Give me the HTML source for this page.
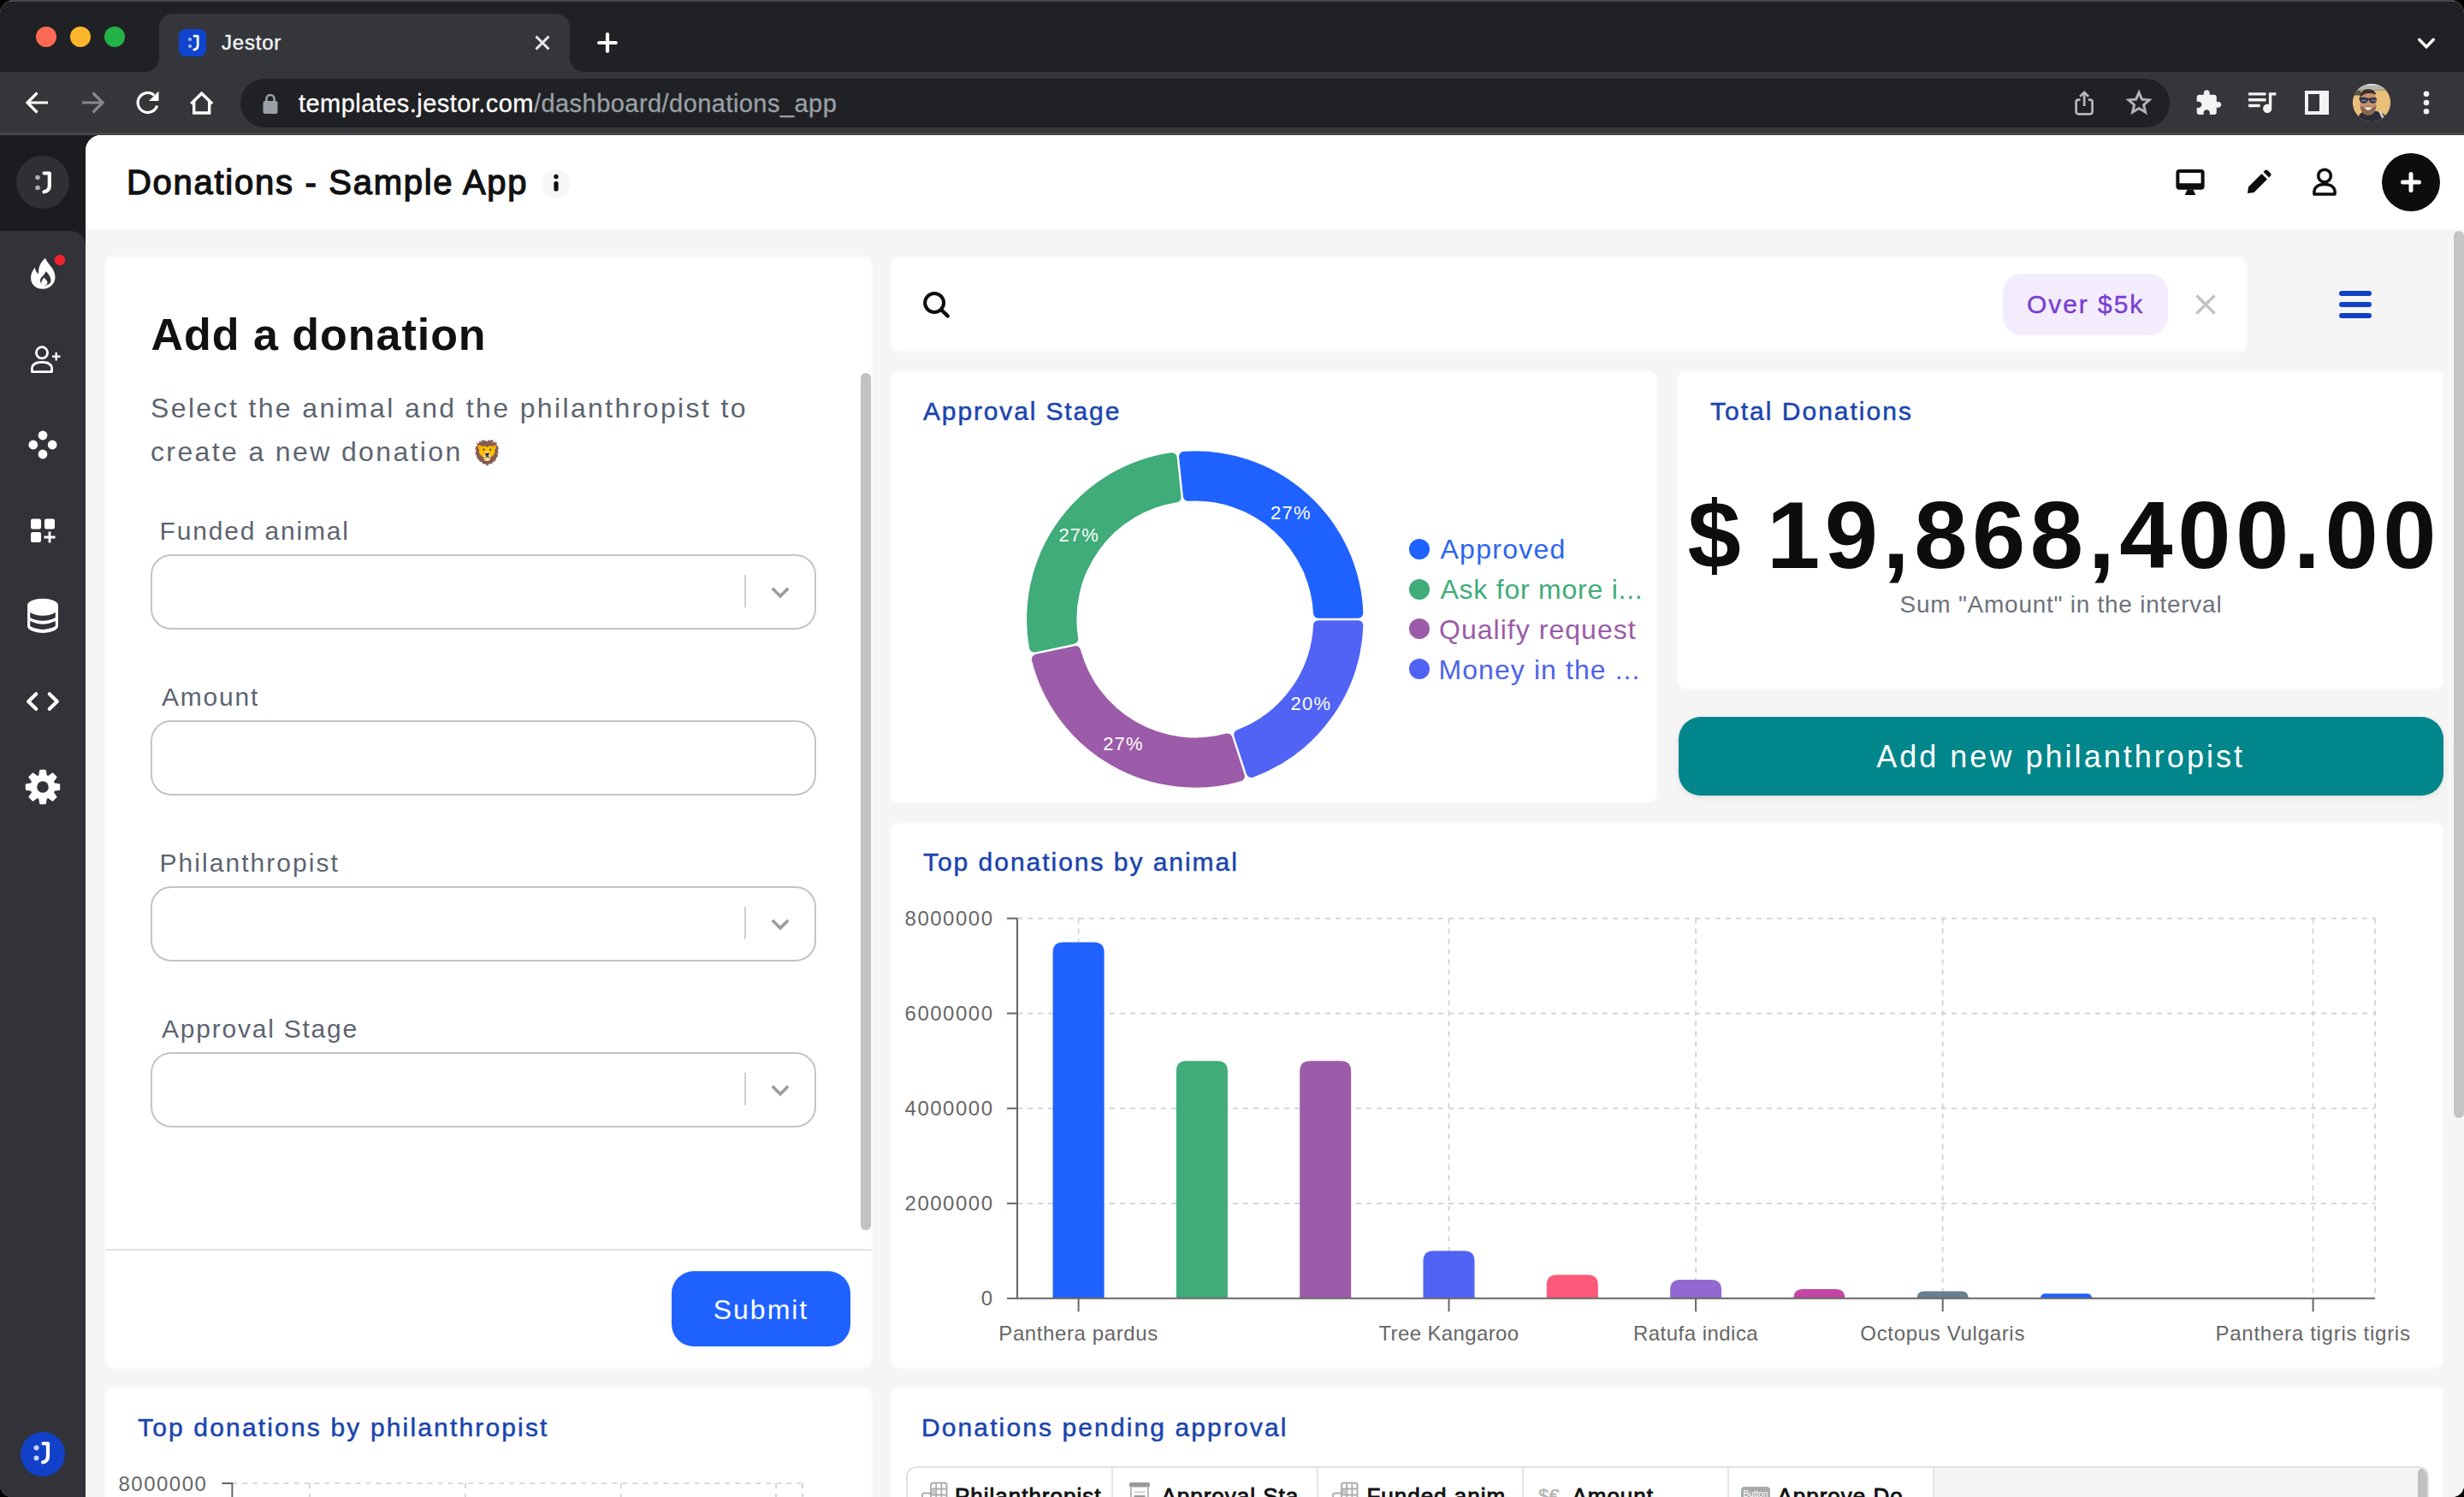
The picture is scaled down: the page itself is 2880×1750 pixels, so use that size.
<!DOCTYPE html>
<html lang="en">
<head>
<meta charset="utf-8">
<title>Jestor</title>
<style>
*{box-sizing:border-box;margin:0;padding:0}
html,body{width:2880px;height:1750px;overflow:hidden;background:#000}
body{font-family:"Liberation Sans",sans-serif;position:relative;color:#111}
.abs{position:absolute}
#win{position:absolute;left:0;top:0;width:2880px;height:1750px;border-radius:16px 16px 14px 14px;overflow:hidden;background:#f5f5f5}
/* ---------- browser chrome ---------- */
#tabbar{position:absolute;left:0;top:0;width:2880px;height:84px;background:#202124}
#tabbar:before{content:"";position:absolute;left:0;top:0;width:100%;height:2px;background:#47484c}
#toolbar{position:absolute;left:0;top:84px;width:2880px;height:74px;background:#35363a;border-bottom:3px solid #45464a}
.tl{position:absolute;top:31.200px;width:24px;height:24px;border-radius:50%}
#tab{position:absolute;left:186px;top:16px;width:480px;height:68px;background:#35363a;border-radius:16px 16px 0 0}
#tab:before,#tab:after{content:"";position:absolute;bottom:0;width:16px;height:16px;background:radial-gradient(circle at 0 0,transparent 15.5px,#35363a 16.5px)}
#tab:before{left:-16px}
#tab:after{right:-16px;background:radial-gradient(circle at 100% 0,transparent 15.5px,#35363a 16.5px)}
#fav{position:absolute;left:209px;top:34px;width:32px;height:32px;border-radius:7.500px;background:#1044cf}
#tabtitle{position:absolute;left:259px;top:30px;font-size:24px;line-height:40px;color:#f1f3f4;letter-spacing:.8px;-webkit-text-stroke:.45px #f1f3f4;white-space:nowrap}
#pill{position:absolute;left:281px;top:92px;width:2255px;height:57px;border-radius:29px;background:#202124}
#url{position:absolute;left:349px;top:100.500px;font-size:29px;line-height:40px;color:#fff;white-space:nowrap;letter-spacing:.45px;-webkit-text-stroke:.3px currentColor}
#url span{color:#9aa0a6}
/* ---------- app ---------- */
#side{position:absolute;left:0;top:158px;width:140px;height:1592px;background:#1b1c20}
#side2{position:absolute;left:0;top:270px;width:100px;height:1480px;background:#323338;border-radius:0 18px 0 0}
#main{position:absolute;left:100px;top:158px;width:2780px;height:1592px;background:#f5f5f5;border-radius:18px 0 0 0;overflow:hidden}
#hdr{position:absolute;left:0;top:0;width:2780px;height:110px;background:#fff}
#title{position:absolute;left:148px;top:188px;font-size:40px;line-height:50px;color:#111;white-space:nowrap;letter-spacing:1.72px;-webkit-text-stroke:1.3px #111}
.card{position:absolute;background:#fff;border-radius:8px;box-shadow:0 0 4px 1px rgba(255,255,255,.85)}
.ct{-webkit-text-stroke:.5px #1a45ad}
.ms{-webkit-text-stroke:.4px currentColor}
.lbl{position:absolute;left:189px;font-size:30px;line-height:40px;color:#5d6470;letter-spacing:1.4px;white-space:nowrap}
.inp{position:absolute;left:176px;width:778px;height:88px;border:2px solid #c4c4c8;border-radius:24px;background:#fff}
.inp.sel:before{content:"";position:absolute;left:692px;top:22px;width:2px;height:38px;background:#cfcfcf}
</style>
</head>
<body>
<div id="win">
<!-- CHROME -->
<div id="tabbar"></div>
<div class="tl" style="left:41.900px;background:#fe6a54"></div>
<div class="tl" style="left:81.900px;background:#feb72d"></div>
<div class="tl" style="left:121.900px;background:#22b446"></div>
<div id="tab"></div>
<div id="fav"><svg width="32" height="32" viewBox="0 0 32 32"><circle cx="13" cy="12" r="2.100" fill="#a9c0f7"/><circle cx="13" cy="20" r="2.100" fill="#a9c0f7"/><path d="M18 8.200h4.200v10.800c0 3.200-1.400 4.600-4.400 5.200" fill="none" stroke="#fff" stroke-width="2.800" stroke-linecap="round" stroke-linejoin="round"/></svg></div>
<div id="tabtitle">Jestor</div>
<svg class="abs" style="left:622px;top:38px" width="24" height="24" viewBox="0 0 24 24"><path d="M4.5 4.5l15 15M19.5 4.5l-15 15" stroke="#e8eaed" stroke-width="3" fill="none"/></svg>
<svg class="abs" style="left:694px;top:34px" width="32" height="32" viewBox="0 0 32 32"><path d="M16 6.200v19.600M6.200 16h19.600" stroke="#fff" stroke-width="4.200" stroke-linecap="round" fill="none"/></svg>
<svg class="abs" style="left:2820px;top:38px" width="32" height="24" viewBox="0 0 32 24"><path d="M7.700 8.300l8.300 8.500 8.300-8.500" stroke="#fff" stroke-width="3.400" fill="none" stroke-linecap="round" stroke-linejoin="miter"/></svg>
<div id="toolbar"></div>
<!-- nav icons -->
<svg class="abs" style="left:28px;top:104px" width="32" height="32" viewBox="0 0 32 32"><path d="M28 16H5M15.5 4.5L4 16l11.500 11.500" stroke="#fff" stroke-width="3.2" fill="none"/></svg>
<svg class="abs" style="left:92px;top:104px" width="32" height="32" viewBox="0 0 32 32"><path d="M4 16h23M16.500 4.500L28 16 16.500 27.500" stroke="#86888c" stroke-width="3.200" fill="none"/></svg>
<svg class="abs" style="left:156px;top:103px" width="34" height="34" viewBox="0 0 34 34"><path d="M27.600 20.500A11.500 11.500 0 1 1 24.200 8.300" stroke="#fff" stroke-width="3.200" fill="none"/><path d="M29.500 3.500v11.500H18z" fill="#fff"/></svg>
<svg class="abs" style="left:219px;top:103px" width="34" height="34" viewBox="0 0 34 34"><path d="M4.300 18.300L16.700 6.200l12.400 12.100" stroke="#fff" stroke-width="3.400" fill="none"/><path d="M7.700 15.500V29h18V15.500" stroke="#fff" stroke-width="3.400" fill="none"/></svg>
<div id="pill"></div>
<svg class="abs" style="left:306px;top:108px" width="20" height="26" viewBox="0 0 20 26"><rect x="1.500" y="10" width="17" height="15" rx="2.500" fill="#9aa0a6"/><path d="M5.500 11V7.500a4.500 4.500 0 0 1 9 0V11" stroke="#9aa0a6" stroke-width="2.600" fill="none"/></svg>
<div id="url">templates.jestor.com<span>/dashboard/donations_app</span></div>
<!-- right icons -->
<svg class="abs" style="left:2422px;top:103px" width="28" height="34" viewBox="0 0 28 34"><path d="M9.500 13.700H7.200a2.500 2.500 0 0 0-2.500 2.500v11.600a2.500 2.500 0 0 0 2.500 2.500h13.900a2.500 2.500 0 0 0 2.500-2.500V16.200a2.500 2.500 0 0 0-2.500-2.500H18.800M14.150 21V5M9.200 9.800l4.950-4.900 4.950 4.900" stroke="#b4b7bb" stroke-width="2.700" fill="none" stroke-linejoin="miter"/></svg>
<svg class="abs" style="left:2481.800px;top:102px" width="36.200" height="36.200" viewBox="0 0 24 24"><path stroke="#b4b7bb" stroke-width=".35" d="M22 9.240l-7.190-.620L12 2 9.190 8.630 2 9.240l5.460 4.730L5.820 21 12 17.270 18.180 21l-1.630-7.030L22 9.240zM12 15.400l-3.760 2.270 1-4.280-3.320-2.880 4.380-.380L12 6.100l1.710 4.040 4.380.380-3.320 2.880 1 4.280L12 15.400z" fill="#b4b7bb"/></svg>
<svg class="abs" style="left:2564.500px;top:103.800px" width="32.600" height="32.600" viewBox="0 0 24 24"><path d="M20.500 11H19V7c0-1.100-.900-2-2-2h-4V3.500C13 2.120 11.880 1 10.500 1S8 2.120 8 3.500V5H4c-1.100 0-1.990.900-1.990 2v3.800H3.500c1.490 0 2.700 1.210 2.700 2.700s-1.210 2.700-2.700 2.700H2V20c0 1.100.900 2 2 2h3.800v-1.500c0-1.490 1.210-2.700 2.700-2.700s2.700 1.210 2.700 2.700V22H17c1.100 0 2-.900 2-2v-4h1.500c1.380 0 2.500-1.120 2.500-2.500S21.880 11 20.500 11z" fill="#f1f3f4"/></svg>
<svg class="abs" style="left:2622.900px;top:97.500px" width="40.800" height="40.800" viewBox="0 0 24 24"><path d="M15 6H3v2h12V6zm0 4H3v2h12v-2zM3 16h8v-2H3v2zM17 6v8.180c-.310-.110-.650-.180-1-.180-1.660 0-3 1.340-3 3s1.340 3 3 3 3-1.340 3-3V8h3V6h-5z" fill="#f1f3f4"/></svg>
<svg class="abs" style="left:2693px;top:105px" width="30" height="30" viewBox="0 0 30 30"><path d="M1 1h28v28H1zM5 5v20h13V5z" fill="#f1f3f4" fill-rule="evenodd"/></svg>
<svg class="abs" style="left:2748.800px;top:97px" width="46" height="46" viewBox="0 0 46 46"><defs><clipPath id="avc"><circle cx="23" cy="23" r="22.100"/></clipPath></defs><g clip-path="url(#avc)"><rect width="46" height="46" fill="#e8c07a"/><rect width="46" height="7.500" fill="#b4b8b4"/><rect width="46" height="2.600" fill="#e6e7e6"/><path d="M0 7.500h46v1.600H0z" fill="#9c9a86"/><rect x="1" y="9" width="9.500" height="5.500" fill="#4f5848"/><path d="M6 46c.5-7 3.500-11.500 8-12.500l12-1c8 1 15 4 17 13.500z" fill="#2a2c38"/><path d="M31 33l5.500 11 2.500-1.200L33.500 32z" fill="#d8d4d0"/><path d="M9.500 21c0-8 4-12.500 9.500-12.500s9.500 4.500 9.500 12v6c0 6.500-4 11-9.500 11s-9.500-4.500-9.500-11z" fill="#c88f6c"/><path d="M9.800 26c.5 7 4 12.200 9.200 12.200s8.800-5 9.400-12.200c-1.600 2-3.200 2.600-4.800 2.400-1.600-1.400-7-1.400-8.800 0-1.800.2-3.600-.6-5-2.400z" fill="#7f5e4a" opacity=".85"/><path d="M9.300 18c-.5-6 3.200-10.800 9.700-10.800 5 0 8.300 2.300 9.300 6.300-3-1.300-6-1.800-9.300-1.500-4.200.4-7.700 2.400-9.700 6z" fill="#3b2d27"/><path d="M8.300 17.500c3.300-.9 6.500-.9 9.800 0l1.800.7 1.800-.7c2.400-.7 4.700-.8 7 0v2.300c0 2.400-1.700 4-4 4-2.300 0-3.900-1.200-4.600-3.300l-.7-1.200-.7 1.200c-.8 2.100-2.500 3.300-4.900 3.300-2.600 0-4.700-1.700-4.900-4.200z" fill="#262b42"/><path d="M10.500 19.200h6.500v2.600h-5.800zM22 19.200h6v2.600h-5.400z" fill="#6f7f8f" opacity=".8"/><path d="M14.800 28.200h8.600c-.7 2.400-2.300 3.600-4.300 3.600s-3.600-1.200-4.300-3.600z" fill="#f3e6e0"/></g></svg>
<svg class="abs" style="left:2828px;top:104px" width="16" height="32" viewBox="0 0 16 32"><circle cx="8" cy="5.700" r="3.300" fill="#f1f3f4"/><circle cx="8" cy="16" r="3.300" fill="#f1f3f4"/><circle cx="8" cy="26.300" r="3.300" fill="#f1f3f4"/></svg>
<!-- APP -->
<div id="side"></div>
<div id="side2"></div>
<div class="abs" style="left:19px;top:182px;width:62px;height:62px;border-radius:50%;background:#2f3034"></div>
<svg class="abs" style="left:19px;top:182px" width="62" height="62" viewBox="0 0 62 62"><circle cx="25" cy="25.500" r="2.800" fill="#a9abb0"/><circle cx="25" cy="37.500" r="2.800" fill="#a9abb0"/><path d="M32.500 20.500h6.300v14.500c0 4.500-2.100 6.600-6.300 7.300" fill="none" stroke="#fff" stroke-width="4.200" stroke-linecap="round" stroke-linejoin="round"/></svg>
<!-- fire -->
<svg class="abs" style="left:34px;top:298px" width="34" height="42" viewBox="0 0 34 42"><path d="M19.100 3.700C20.500 10 30.500 15 30.500 26.100C30.500 34 24 39.800 16.100 39.800C8 39.800 2.100 34.500 2.100 27.200C2.100 21 5 17.500 6.700 14.500C7.200 18 8.800 21 11.100 22.500C10.500 17 12 9 19.100 3.700Z" fill="#fff"/><path d="M19.700 19C23 23 25.500 26 25.500 29.500C25.500 33 22.500 35.500 19 35.500C15.500 35.500 13 33.200 13 30C13 26 18 24 19.700 19Z" fill="#323338"/><path d="M17.300 26.500C19.500 28.500 21.500 30.300 21.500 32.200C21.500 34.200 19.800 35.600 17.800 35.600C15.800 35.600 14.200 34.200 14.200 32.200C14.200 30 16.300 28.800 17.300 26.500Z" fill="#fff"/></svg>
<svg class="abs" style="left:62px;top:296px" width="16" height="16" viewBox="0 0 16 16"><circle cx="8" cy="8" r="6.200" fill="#f5222d"/></svg>
<!-- user plus -->
<svg class="abs" style="left:30px;top:398px" width="46" height="42" viewBox="0 0 46 42"><circle cx="19" cy="14.300" r="6.600" stroke="#fff" stroke-width="2.800" fill="none"/><path d="M7.400 36.600V33.500c0-5.200 4.200-8.100 11.600-8.100s11.600 2.900 11.600 8.100v3.100z" stroke="#fff" stroke-width="2.800" fill="none" stroke-linejoin="round"/><path d="M35.700 14v9.400M31 18.700h9.400" stroke="#fff" stroke-width="2.400" fill="none"/></svg>
<!-- dots -->
<svg class="abs" style="left:30px;top:500px" width="40" height="40" viewBox="0 0 40 40"><circle cx="20" cy="9" r="5.400" fill="#fff"/><circle cx="20" cy="31" r="5.400" fill="#fff"/><circle cx="8.800" cy="20" r="5.400" fill="#fff"/><circle cx="31.200" cy="20" r="5.400" fill="#fff"/></svg>
<!-- grid plus -->
<svg class="abs" style="left:34px;top:604px" width="34" height="34" viewBox="0 0 34 34"><rect x="2" y="2.500" width="12" height="12" rx="2.200" fill="#fff"/><rect x="18" y="2.500" width="12" height="12" rx="2.200" fill="#fff"/><rect x="2" y="18" width="12" height="12" rx="2.200" fill="#fff"/><path d="M24 17.500v13M17.500 24h13" stroke="#fff" stroke-width="2.800" fill="none"/></svg>
<!-- database -->
<svg class="abs" style="left:30px;top:698px" width="40" height="44" viewBox="0 0 40 44"><path d="M2.050 9.600A17.950 7.800 0 0 1 37.950 9.600V34.100A17.950 7.800 0 0 1 2.050 34.100Z" fill="#fff"/><path d="M5.200 18Q20 25.700 34.800 18V24.060Q20 31.680 5.200 24.060Z" fill="#323338"/><path d="M5.200 28.070Q20 35.290 34.800 28.070V34.080Q20 41.700 5.200 34.080Z" fill="#323338"/></svg>
<!-- code -->
<svg class="abs" style="left:28px;top:804px" width="44" height="32" viewBox="0 0 44 32"><path d="M14.200 7.300L5.200 16l9 8.700M29.800 7.300L38.800 16l-9 8.700" stroke="#fff" stroke-width="4.200" fill="none" stroke-linecap="round" stroke-linejoin="round"/></svg>
<!-- gear -->
<svg class="abs" style="left:28px;top:898px" width="44" height="44" viewBox="-22 -22 44 44"><path d="M-3.86 -13.04L-2.87 -19.19L2.87 -19.19L3.86 -13.04L6.49 -11.95L11.54 -15.59L15.59 -11.54L11.95 -6.49L13.04 -3.86L19.19 -2.87L19.19 2.87L13.04 3.86L11.95 6.49L15.59 11.54L11.54 15.59L6.49 11.95L3.86 13.04L2.87 19.19L-2.87 19.19L-3.86 13.04L-6.49 11.95L-11.54 15.59L-15.59 11.54L-11.95 6.49L-13.04 3.86L-19.19 2.87L-19.19 -2.87L-13.04 -3.86L-11.95 -6.49L-15.59 -11.54L-11.54 -15.59L-6.49 -11.95Z" fill="#fff" stroke="#fff" stroke-width="2" stroke-linejoin="round"/><circle r="6.800" fill="#323338"/></svg>
<!-- bottom logo -->
<svg class="abs" style="left:24px;top:1674px" width="52" height="52" viewBox="0 0 52 52"><circle cx="26" cy="26" r="26" fill="#1141c8"/><circle cx="18.500" cy="18.500" r="3" fill="#c5d3f7"/><circle cx="18.500" cy="30.500" r="3" fill="#c5d3f7"/><path d="M26.500 13.500h5.500v14.500c0 4.500-2 6.800-6 7.500" fill="none" stroke="#fff" stroke-width="4.200" stroke-linecap="round" stroke-linejoin="round"/></svg>
<div id="main"><div id="hdr"></div></div>
<div id="title">Donations - Sample App</div>
<div class="abs" style="left:633px;top:198px;width:34px;height:34px;border-radius:50%;background:#f7f7f7"></div>
<svg class="abs" style="left:643px;top:202px" width="14" height="26" viewBox="0 0 14 26"><circle cx="7" cy="4.500" r="2.700" fill="#111"/><rect x="4.400" y="10" width="5.200" height="11.500" rx="2" fill="#111"/></svg>
<!-- header icons -->
<svg class="abs" style="left:2542px;top:196px" width="36" height="34" viewBox="0 0 36 34"><path d="M5.400 2h25.200a4 4 0 0 1 4 4v15.700a4 4 0 0 1-4 4H5.400a4 4 0 0 1-4-4V6a4 4 0 0 1 4-4zM5.400 6v12.200h25.200V6z" fill="#0d0d0f" fill-rule="evenodd"/><path d="M14.500 25.500h7l2.800 6.500H11.700z" fill="#0d0d0f"/></svg>
<svg class="abs" style="left:2624px;top:197px" width="32" height="32" viewBox="0 0 32 32"><path d="M3 29l1-7.500L19.500 6l6.500 6.500L10.500 28zM21.500 4l2-2c.8-.8 2-.8 2.800 0l3.700 3.700c.8.800.8 2 0 2.800l-2 2z" fill="#0d0d0f"/></svg>
<svg class="abs" style="left:2700px;top:194px" width="34" height="38" viewBox="0 0 34 38"><circle cx="17" cy="11.500" r="7.300" stroke="#0d0d0f" stroke-width="3.600" fill="none"/><path d="M5 33c-1.200-8 4.500-11.500 12-11.500s13.200 3.500 12 11.500z" stroke="#0d0d0f" stroke-width="3.600" fill="none" stroke-linejoin="round"/></svg>
<div class="abs" style="left:2784px;top:179px;width:68px;height:68px;border-radius:50%;background:#0d0d0f"></div>
<svg class="abs" style="left:2784px;top:179px" width="68" height="68" viewBox="0 0 68 68"><path d="M34 24.500v19M24.500 34h19" stroke="#fff" stroke-width="5" stroke-linecap="round" fill="none"/></svg>
<!-- CONTENT -->
<div class="card" style="left:124px;top:301px;width:894px;height:1297px"></div>
<div class="abs t-add" style="top:357.0px;font-size:52px;line-height:68px;color:#111;white-space:nowrap;letter-spacing:0.98px;font-weight:700;left:176.5px;">Add a donation</div>
<div class="abs t-desc" style="left:176px;top:452.4px;font-size:32px;line-height:51px;color:#5d6470;letter-spacing:2.37px;white-space:nowrap">Select the animal and the philanthropist to<br>create a new donation <span style="font-size:28px;letter-spacing:0">🦁</span></div>
<div class="abs t-lbl0" style="top:601.1px;font-size:30px;line-height:39px;color:#5d6470;white-space:nowrap;letter-spacing:1.83px;left:186.5px;">Funded animal</div>
<div class="inp sel" style="top:648.0px"><svg class="abs" style="left:719px;top:32px" width="30" height="22" viewBox="0 0 30 22"><path d="M5.800 5.800l9.200 9.200 9.200-9.200" stroke="#9a9a9f" stroke-width="3.600" fill="none"/></svg></div>
<div class="abs t-lbl1" style="top:795.1px;font-size:30px;line-height:39px;color:#5d6470;white-space:nowrap;letter-spacing:1.8px;left:189px;">Amount</div>
<div class="inp" style="top:842.0px"></div>
<div class="abs t-lbl2" style="top:989.1px;font-size:30px;line-height:39px;color:#5d6470;white-space:nowrap;letter-spacing:2.04px;left:186.5px;">Philanthropist</div>
<div class="inp sel" style="top:1036.0px"><svg class="abs" style="left:719px;top:32px" width="30" height="22" viewBox="0 0 30 22"><path d="M5.800 5.800l9.200 9.200 9.200-9.200" stroke="#9a9a9f" stroke-width="3.600" fill="none"/></svg></div>
<div class="abs t-lbl3" style="top:1183.1px;font-size:30px;line-height:39px;color:#5d6470;white-space:nowrap;letter-spacing:1.77px;left:189px;">Approval Stage</div>
<div class="inp sel" style="top:1230.0px"><svg class="abs" style="left:719px;top:32px" width="30" height="22" viewBox="0 0 30 22"><path d="M5.800 5.800l9.200 9.200 9.200-9.200" stroke="#9a9a9f" stroke-width="3.600" fill="none"/></svg></div>
<div class="abs" style="left:1006px;top:436px;width:12px;height:1002px;border-radius:6px;background:#c1c1c1"></div>
<div class="abs" style="left:124px;top:1460px;width:894px;height:2px;background:#e2e2e2"></div>
<div class="abs" style="left:785px;top:1486px;width:209px;height:88px;border-radius:26px;background:#1f62ff"></div>
<div class="abs t-submit" style="top:1509.9px;font-size:32px;line-height:42px;color:#fff;white-space:nowrap;letter-spacing:1.98px;left:-110.5px;width:2000px;text-align:center;">Submit</div>
<div class="card" style="left:1042px;top:302px;width:1583px;height:108px"></div>
<svg class="abs" style="left:1074px;top:336px" width="40" height="40" viewBox="0 0 40 40"><circle cx="18.100" cy="18" r="10.950" stroke="#0d0d0f" stroke-width="4" fill="none"/><path d="M26 26l7.700 7.400" stroke="#0d0d0f" stroke-width="4.400" stroke-linecap="round"/></svg>
<div class="abs" style="left:2341px;top:320px;width:193px;height:72px;border-radius:22px;background:#f3ecfd"></div>
<div class="abs t-chip ms" style="top:336.1px;font-size:30px;line-height:39px;color:#7a3ed0;white-space:nowrap;letter-spacing:1.95px;left:2369px;">Over $5k</div>
<svg class="abs" style="left:2564px;top:342px" width="28" height="28" viewBox="0 0 28 28"><path d="M3.500 3.500l21 21M24.500 3.500l-21 21" stroke="#c2c2c4" stroke-width="3.400" fill="none"/></svg>
<svg class="abs" style="left:2732px;top:338px" width="42" height="36" viewBox="0 0 42 36"><path d="M5 5h32M5 18h32M5 31h32" stroke="#1141c4" stroke-width="6" stroke-linecap="round" fill="none"/></svg>
<div class="card" style="left:1042px;top:434.500px;width:894px;height:502.500px"></div>
<div class="abs ct t-ct1" style="top:460.7px;font-size:30px;line-height:39px;color:#1a45ad;white-space:nowrap;letter-spacing:1.86px;left:1079px;">Approval Stage</div>
<svg class="abs" style="left:1042px;top:434px" width="894" height="503" viewBox="1042 434 894 503"><path d="M1587.36 716.80A190.7 190.7 0 0 0 1384.04 533.73L1388.89 579.82A144.4 144.4 0 0 1 1541.02 716.80Z" fill="#1f62ff" stroke="#1f62ff" stroke-width="12" stroke-linejoin="round"/><path d="M1369.72 535.23A190.7 190.7 0 0 0 1208.90 756.58L1254.23 746.94A144.4 144.4 0 0 1 1374.56 581.32Z" fill="#3fac7a" stroke="#3fac7a" stroke-width="12" stroke-linejoin="round"/><path d="M1211.90 770.66A190.7 190.7 0 0 0 1448.84 907.46L1434.52 863.39A144.4 144.4 0 0 1 1257.23 761.03Z" fill="#9c5ba8" stroke="#9c5ba8" stroke-width="12" stroke-linejoin="round"/><path d="M1462.54 903.01A190.7 190.7 0 0 0 1587.36 731.20L1541.02 731.20A144.4 144.4 0 0 1 1448.21 858.94Z" fill="#5063f5" stroke="#5063f5" stroke-width="12" stroke-linejoin="round"/><text x="1508.9" y="607.3" text-anchor="middle" font-size="22" fill="#fff" letter-spacing="1.2" font-family="Liberation Sans, sans-serif">27%</text><text x="1261.2" y="633.3" text-anchor="middle" font-size="22" fill="#fff" letter-spacing="1.2" font-family="Liberation Sans, sans-serif">27%</text><text x="1313.0" y="876.9" text-anchor="middle" font-size="22" fill="#fff" letter-spacing="1.2" font-family="Liberation Sans, sans-serif">27%</text><text x="1532.4" y="830.3" text-anchor="middle" font-size="22" fill="#fff" letter-spacing="1.2" font-family="Liberation Sans, sans-serif">20%</text></svg>
<div class="abs" style="left:1647px;top:629.8px;width:24px;height:24px;border-radius:50%;background:#1f62ff"></div>
<div class="abs t-leg0" style="top:621.2px;font-size:32px;line-height:42px;color:#2a66f0;white-space:nowrap;letter-spacing:1.27px;left:1683.5px;">Approved</div>
<div class="abs" style="left:1647px;top:676.6px;width:24px;height:24px;border-radius:50%;background:#3fac7a"></div>
<div class="abs t-leg1" style="top:668.0px;font-size:32px;line-height:42px;color:#3fac7a;white-space:nowrap;letter-spacing:0.76px;left:1683.5px;">Ask for more i...</div>
<div class="abs" style="left:1647px;top:723.4px;width:24px;height:24px;border-radius:50%;background:#9c5ba8"></div>
<div class="abs t-leg2" style="top:714.8px;font-size:32px;line-height:42px;color:#9c5ba8;white-space:nowrap;letter-spacing:1.03px;left:1682.0px;">Qualify request</div>
<div class="abs" style="left:1647px;top:770.2px;width:24px;height:24px;border-radius:50%;background:#5063f5"></div>
<div class="abs t-leg3" style="top:761.6px;font-size:32px;line-height:42px;color:#4d63e8;white-space:nowrap;letter-spacing:1.08px;left:1681.5px;">Money in the ...</div>
<div class="card" style="left:1962px;top:434.500px;width:893px;height:370.500px"></div>
<div class="abs ct t-ct2" style="top:460.7px;font-size:30px;line-height:39px;color:#1a45ad;white-space:nowrap;letter-spacing:2.01px;left:1999px;">Total Donations</div>
<div class="abs t-big" style="top:552.7px;font-size:112px;line-height:146px;color:#0d0d0f;white-space:nowrap;letter-spacing:5.54px;font-weight:700;left:1972.4px;word-spacing:-12px;">$ 19,868,400.00</div>
<div class="abs t-sum" style="top:688.9px;font-size:28px;line-height:36px;color:#6d727c;white-space:nowrap;letter-spacing:0.74px;left:1409px;width:2000px;text-align:center;">Sum "Amount" in the interval</div>
<div class="abs" style="left:1962px;top:838px;width:893.500px;height:92px;border-radius:26px;background:#00868b;box-shadow:0 2px 6px rgba(0,0,0,.1)"></div>
<div class="abs t-addph" style="top:861.0px;font-size:36px;line-height:47px;color:#fff;white-space:nowrap;letter-spacing:3.03px;left:1408.6px;width:2000px;text-align:center;">Add new philanthropist</div>
<div class="card" style="left:1042px;top:962.500px;width:1813px;height:635px"></div>
<div class="abs ct t-ct3" style="top:988.4px;font-size:30px;line-height:39px;color:#1a45ad;white-space:nowrap;letter-spacing:1.97px;left:1079px;">Top donations by animal</div>
<svg class="abs" style="left:1042px;top:1040px" width="1813" height="557" viewBox="1042 1040 1813 557" font-family="Liberation Sans, sans-serif"><path d="M1189 1073.6H2776" stroke="#cfcfcf" stroke-width="1.700" stroke-dasharray="6 6" fill="none"/><path d="M1189 1184.6H2776" stroke="#cfcfcf" stroke-width="1.700" stroke-dasharray="6 6" fill="none"/><path d="M1189 1295.7H2776" stroke="#cfcfcf" stroke-width="1.700" stroke-dasharray="6 6" fill="none"/><path d="M1189 1406.8H2776" stroke="#cfcfcf" stroke-width="1.700" stroke-dasharray="6 6" fill="none"/><path d="M1260.6 1073.6V1517.8" stroke="#cfcfcf" stroke-width="1.700" stroke-dasharray="6 6" fill="none"/><path d="M1693.5 1073.6V1517.8" stroke="#cfcfcf" stroke-width="1.700" stroke-dasharray="6 6" fill="none"/><path d="M1982.1 1073.6V1517.8" stroke="#cfcfcf" stroke-width="1.700" stroke-dasharray="6 6" fill="none"/><path d="M2270.7 1073.6V1517.8" stroke="#cfcfcf" stroke-width="1.700" stroke-dasharray="6 6" fill="none"/><path d="M2703.6 1073.6V1517.8" stroke="#cfcfcf" stroke-width="1.700" stroke-dasharray="6 6" fill="none"/><path d="M2776 1073.6V1517.8" stroke="#cfcfcf" stroke-width="1.700" stroke-dasharray="6 6" fill="none"/><path d="M1230.6 1517.8V1113.4Q1230.6 1101.4 1242.6 1101.4H1278.6Q1290.6 1101.4 1290.6 1113.4V1517.8Z" fill="#1f62ff"/><path d="M1374.9 1517.8V1252.2Q1374.9 1240.2 1386.9 1240.2H1422.9Q1434.9 1240.2 1434.9 1252.2V1517.8Z" fill="#3fac7a"/><path d="M1519.2 1517.8V1252.2Q1519.2 1240.2 1531.2 1240.2H1567.2Q1579.2 1240.2 1579.2 1252.2V1517.8Z" fill="#9c5ba8"/><path d="M1663.5 1517.8V1474.3Q1663.5 1462.3 1675.5 1462.3H1711.5Q1723.5 1462.3 1723.5 1474.3V1517.8Z" fill="#5063f5"/><path d="M1807.8 1517.8V1502.2Q1807.8 1490.2 1819.8 1490.2H1855.8Q1867.8 1490.2 1867.8 1502.2V1517.8Z" fill="#fb5a7b"/><path d="M1952.1 1517.8V1507.9Q1952.1 1495.9 1964.1 1495.9H2000.1Q2012.1 1495.9 2012.1 1507.9V1517.8Z" fill="#9468d2"/><path d="M2096.4 1517.8V1517.8Q2096.4 1507.0 2107.2 1507.0H2145.6Q2156.4 1507.0 2156.4 1517.8V1517.8Z" fill="#c346a4"/><path d="M2240.7 1517.8V1517.8Q2240.7 1509.6 2248.9 1509.6H2292.5Q2300.7 1509.6 2300.7 1517.8V1517.8Z" fill="#66808f"/><path d="M2385.0 1517.8V1517.8Q2385.0 1512.2 2390.6 1512.2H2439.4Q2445.0 1512.2 2445.0 1517.8V1517.8Z" fill="#1f62ff"/><rect x="2529.3" y="1517.1" width="60" height="0.7" fill="#3fac7a" opacity=".6"/><path d="M1189 1073.6V1517.8H2776" stroke="#666" stroke-width="2" fill="none"/><path d="M1177 1073.6H1189" stroke="#666" stroke-width="2"/><text x="1161.5" y="1082.2" text-anchor="end" font-size="24" letter-spacing="1.5" fill="#666">8000000</text><path d="M1177 1184.6H1189" stroke="#666" stroke-width="2"/><text x="1161.5" y="1193.2" text-anchor="end" font-size="24" letter-spacing="1.5" fill="#666">6000000</text><path d="M1177 1295.7H1189" stroke="#666" stroke-width="2"/><text x="1161.5" y="1304.3" text-anchor="end" font-size="24" letter-spacing="1.5" fill="#666">4000000</text><path d="M1177 1406.8H1189" stroke="#666" stroke-width="2"/><text x="1161.5" y="1415.3" text-anchor="end" font-size="24" letter-spacing="1.5" fill="#666">2000000</text><path d="M1177 1517.8H1189" stroke="#666" stroke-width="2"/><text x="1161.5" y="1526.4" text-anchor="end" font-size="24" letter-spacing="1.5" fill="#666">0</text><path d="M1260.6 1517.8V1533.3" stroke="#666" stroke-width="2"/><text x="1260.6" y="1567.300" text-anchor="middle" font-size="24" letter-spacing="0.61" fill="#666" class="xl0">Panthera pardus</text><path d="M1693.5 1517.8V1533.3" stroke="#666" stroke-width="2"/><text x="1693.5" y="1567.300" text-anchor="middle" font-size="24" letter-spacing="0.37" fill="#666" class="xl3">Tree Kangaroo</text><path d="M1982.1 1517.8V1533.3" stroke="#666" stroke-width="2"/><text x="1982.1" y="1567.300" text-anchor="middle" font-size="24" letter-spacing="0.47" fill="#666" class="xl5">Ratufa indica</text><path d="M2270.7 1517.8V1533.3" stroke="#666" stroke-width="2"/><text x="2270.7" y="1567.300" text-anchor="middle" font-size="24" letter-spacing="0.68" fill="#666" class="xl7">Octopus Vulgaris</text><path d="M2703.6 1517.8V1533.3" stroke="#666" stroke-width="2"/><text x="2703.6" y="1567.300" text-anchor="middle" font-size="24" letter-spacing="0.73" fill="#666" class="xl10">Panthera tigris tigris</text></svg>
<div class="card" style="left:124px;top:1623px;width:894px;height:200px"></div>
<div class="abs ct t-ct4" style="top:1648.7px;font-size:30px;line-height:39px;color:#1a45ad;white-space:nowrap;letter-spacing:2.16px;left:161px;">Top donations by philanthropist</div>
<svg class="abs" style="left:124px;top:1700px" width="895" height="50" viewBox="124 1700 895 50" font-family="Liberation Sans, sans-serif"><path d="M271.400 1734H938" stroke="#cfcfcf" stroke-width="1.700" stroke-dasharray="6 6" fill="none"/><path d="M362 1734V1760" stroke="#cfcfcf" stroke-width="1.700" stroke-dasharray="6 6" fill="none"/><path d="M544 1734V1760" stroke="#cfcfcf" stroke-width="1.700" stroke-dasharray="6 6" fill="none"/><path d="M725.7 1734V1760" stroke="#cfcfcf" stroke-width="1.700" stroke-dasharray="6 6" fill="none"/><path d="M907 1734V1760" stroke="#cfcfcf" stroke-width="1.700" stroke-dasharray="6 6" fill="none"/><path d="M938 1734V1760" stroke="#cfcfcf" stroke-width="1.700" stroke-dasharray="6 6" fill="none"/><path d="M259.400 1734H271.400V1760" stroke="#666" stroke-width="2" fill="none"/><text x="242.400" y="1742.600" text-anchor="end" font-size="24" letter-spacing="1.5" fill="#666">8000000</text></svg>
<div class="card" style="left:1042px;top:1623px;width:1813px;height:200px"></div>
<div class="abs ct t-ct5" style="top:1648.7px;font-size:30px;line-height:39px;color:#1a45ad;white-space:nowrap;letter-spacing:2.11px;left:1077px;">Donations pending approval</div>
<div class="abs" style="left:1059px;top:1714px;width:1780px;height:60px;border:2px solid #e1e1e3;border-radius:12px 12px 0 0;background:#f5f5f6;overflow:hidden"><div class="abs" style="left:0;top:0;width:1199px;height:60px;background:#fff"></div><div class="abs" style="left:238px;top:0;width:2px;height:60px;background:#e6e6e8"></div><div class="abs" style="left:478px;top:0;width:2px;height:60px;background:#e6e6e8"></div><div class="abs" style="left:718px;top:0;width:2px;height:60px;background:#e6e6e8"></div><div class="abs" style="left:958px;top:0;width:2px;height:60px;background:#e6e6e8"></div><div class="abs" style="left:1198px;top:0;width:2px;height:60px;background:#e6e6e8"></div><div class="abs" style="left:1765px;top:0;width:13px;height:60px;background:#c1c1c1;border-radius:7px 7px 0 0"></div></div>
<div class="abs t-th0" style="top:1732.0px;font-size:26px;line-height:34px;color:#111;white-space:nowrap;letter-spacing:1.0px;left:1115.9px;-webkit-text-stroke:.9px #111;">Philanthropist</div>
<div class="abs t-th1" style="top:1732.0px;font-size:26px;line-height:34px;color:#111;white-space:nowrap;letter-spacing:1.0px;left:1357.4px;-webkit-text-stroke:.9px #111;">Approval Sta</div>
<div class="abs t-th2" style="top:1732.0px;font-size:26px;line-height:34px;color:#111;white-space:nowrap;letter-spacing:1.0px;left:1597.4px;-webkit-text-stroke:.9px #111;">Funded anim</div>
<div class="abs t-th3" style="top:1732.0px;font-size:26px;line-height:34px;color:#111;white-space:nowrap;letter-spacing:1.0px;left:1837.4px;-webkit-text-stroke:.9px #111;">Amount</div>
<div class="abs t-th4" style="top:1732.0px;font-size:26px;line-height:34px;color:#111;white-space:nowrap;letter-spacing:1.0px;left:2077.4px;-webkit-text-stroke:.9px #111;">Approve Do</div>
<svg class="abs" style="left:1077px;top:1731px" width="32" height="24" viewBox="0 0 32 24"><rect x="11" y="2.500" width="18.500" height="22" rx="3" fill="#fff" stroke="#adadad" stroke-width="2"/><path d="M11 9.500h18.500M11 16.500h18.500M17.200 2.500v22M23.400 2.500v22" stroke="#adadad" stroke-width="1.800" fill="none"/><rect x="11.900" y="10.400" width="4.400" height="5.200" fill="#c8c8c8"/><rect x="1" y="14.500" width="10" height="10" rx="2.500" fill="#fff" stroke="#adadad" stroke-width="2"/></svg>
<svg class="abs" style="left:1557px;top:1731px" width="32" height="24" viewBox="0 0 32 24"><rect x="11" y="2.500" width="18.500" height="22" rx="3" fill="#fff" stroke="#adadad" stroke-width="2"/><path d="M11 9.500h18.500M11 16.500h18.500M17.200 2.500v22M23.400 2.500v22" stroke="#adadad" stroke-width="1.800" fill="none"/><rect x="11.900" y="10.400" width="4.400" height="5.200" fill="#c8c8c8"/><rect x="1" y="14.500" width="10" height="10" rx="2.500" fill="#fff" stroke="#adadad" stroke-width="2"/></svg>
<svg class="abs" style="left:1319px;top:1732px" width="26" height="20" viewBox="0 0 26 20"><rect x="1" y="1" width="24" height="5.600" rx="1.500" fill="#9b9b9b"/><path d="M3 6.500V20M23 6.500V20" stroke="#b9b9b9" stroke-width="2"/><rect x="6.500" y="11" width="13" height="2.600" fill="#dcdcdc"/><rect x="6.500" y="16" width="13" height="4" fill="#9b9b9b"/></svg>
<div class="abs" style="top:1733.9px;font-size:22px;line-height:29px;color:#b5b5b5;white-space:nowrap;letter-spacing:0.3px;left:1798px;-webkit-text-stroke:.5px #b5b5b5;">$€</div>
<div class="abs" style="left:2035px;top:1737.500px;width:34px;height:20px;border-radius:4px;background:#a9a9a9"></div>
<div class="abs" style="top:1739.5px;font-size:10px;line-height:13px;color:#fff;white-space:nowrap;left:1052px;width:2000px;text-align:center;">Button</div>
<div class="abs" style="left:2868px;top:270px;width:12px;height:1037px;border-radius:6px;background:#c4c3c6"></div>
</div>
</body>
</html>
